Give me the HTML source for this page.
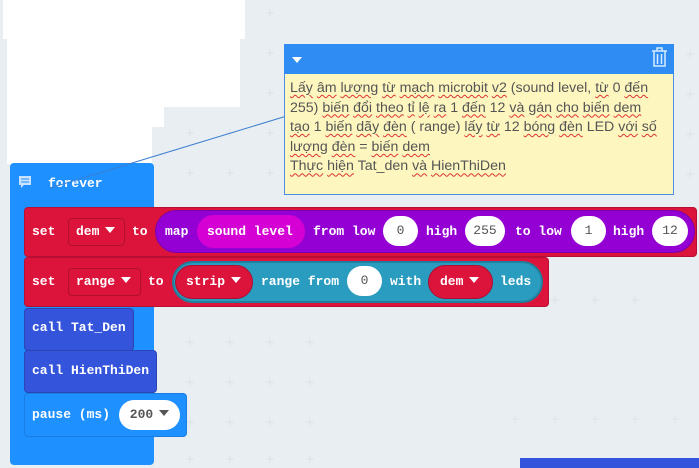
<!DOCTYPE html>
<html><head><meta charset="utf-8"><style>
*{margin:0;padding:0;box-sizing:border-box}
body{width:699px;height:468px;overflow:hidden;background:#e9eef2;position:relative;font-family:"Liberation Mono",monospace;font-weight:bold;font-size:13px;color:#fff}
.a{position:absolute}
.t{position:absolute;line-height:16px;white-space:nowrap}
.w{position:absolute;background:#fff;border-radius:15px;color:#555;text-align:center;line-height:30px;height:30px;font-weight:normal}
.dd::after{content:"";display:inline-block;margin-left:6px;border-left:5px solid transparent;border-right:5px solid transparent;border-top:6px solid currentColor;vertical-align:2px}
.cm{font-family:"Liberation Sans",sans-serif;font-weight:normal;font-size:14.2px;color:#555;line-height:19.6px;white-space:nowrap}
.cm u{text-decoration:underline wavy #d33;text-decoration-thickness:1px;text-underline-offset:2px}
</style></head><body>
<svg class="a" style="left:0;top:0" width="699" height="468" stroke="#dde2e6">
<path d="M270 9v8M266 13h8M270 49v8M266 53h8M270 89v8M266 93h8M190 129v8M186 133h8M230 129v8M226 133h8M270 129v8M266 133h8M190 169v8M186 173h8M230 169v8M226 173h8M270 169v8M266 173h8
M150 338v8M190 338v8M230 338v8M270 338v8M310 338v8M146 342h8M186 342h8M226 342h8M266 342h8M306 342h8
M190 378v8M230 378v8M270 378v8M310 378v8M186 382h8M226 382h8M266 382h8M306 382h8
M190 418v8M230 418v8M270 418v8M310 418v8M186 422h8M226 422h8M266 422h8M306 422h8
M190 455v8M230 455v8M270 455v8M310 455v8M186 459h8M226 459h8M266 459h8M306 459h8
M555 296v8M595 296v8M635 296v8M551 300h8M591 300h8M631 300h8
M515 415v8M555 415v8M595 415v8M635 415v8M675 415v8M511 419h8M551 419h8M591 419h8M631 419h8M671 419h8
M690 50v8M690 90v8M690 130v8M690 170v8M686 54h8M686 94h8M686 134h8M686 174h8
M310 298v8M350 298v8M390 298v8M430 298v8M470 298v8M306 302h8M346 302h8M386 302h8M426 302h8M466 302h8"/>
</svg>
<div class="a" style="left:3px;top:0;width:242px;height:39px;background:#fff"></div>
<div class="a" style="left:7px;top:39px;width:233px;height:68px;background:#fff"></div>
<div class="a" style="left:7px;top:107px;width:157px;height:20px;background:#fff"></div>
<div class="a" style="left:7px;top:127px;width:145px;height:37px;background:#fff"></div>

<div class="a" style="left:10px;top:163px;width:144px;height:302px;background:#1e90ff;border-radius:4px"></div>
<svg class="a" style="left:18px;top:175px" width="14" height="13"><rect x="1" y="1" width="12" height="9" fill="#c9e2ff"/><path d="M3 10v3l3-3z" fill="#c9e2ff"/><path d="M3 4h8M3 7h8" stroke="#1e90ff"/></svg>
<div class="t" style="left:48px;top:176px">forever</div>

<div class="a" style="left:24px;top:207px;width:673px;height:50px;background:#dc143c;border-radius:4px;border:1px solid #b81034"></div>
<div class="t" style="left:32px;top:224px">set</div>
<div class="a dd" style="left:68px;top:218px;width:57px;height:28px;border:1px solid #b0102f;border-radius:4px;line-height:26px;padding-left:7px">dem</div>
<div class="t" style="left:132px;top:224px">to</div>
<div class="a" style="left:155px;top:210px;width:540px;height:43px;background:#9400d3;border-radius:22px;border:1px solid #7a00ad"></div>
<div class="t" style="left:165px;top:224px">map</div>
<div class="a" style="left:197px;top:215px;width:108px;height:33px;background:#d400d4;border-radius:17px"></div>
<div class="t" style="left:207px;top:224px">sound level</div>
<div class="t" style="left:313px;top:224px">from low</div>
<div class="w" style="left:383px;top:216px;width:35px">0</div>
<div class="t" style="left:426px;top:224px">high</div>
<div class="w" style="left:465px;top:216px;width:40px">255</div>
<div class="t" style="left:515px;top:224px">to low</div>
<div class="w" style="left:571px;top:216px;width:35px">1</div>
<div class="t" style="left:613px;top:224px">high</div>
<div class="w" style="left:652px;top:216px;width:36px">12</div>

<div class="a" style="left:24px;top:257px;width:525px;height:50px;background:#dc143c;border-radius:4px;border:1px solid #b81034"></div>
<div class="t" style="left:32px;top:274px">set</div>
<div class="a dd" style="left:68px;top:268px;width:73px;height:28px;border:1px solid #b0102f;border-radius:4px;line-height:26px;padding-left:7px">range</div>
<div class="t" style="left:148px;top:274px">to</div>
<div class="a" style="left:172px;top:261px;width:371px;height:42px;background:#2a9cbf;border-radius:21px;border:2px solid #1f7f9c"></div>
<div class="a dd" style="left:175px;top:265px;width:78px;height:34px;background:#dc143c;border-radius:17px;border:1px solid #a80f30;line-height:32px;padding-left:10px">strip</div>
<div class="t" style="left:261px;top:274px">range from</div>
<div class="w" style="left:347px;top:266px;width:35px">0</div>
<div class="t" style="left:390px;top:274px">with</div>
<div class="a dd" style="left:428px;top:265px;width:65px;height:34px;background:#dc143c;border-radius:17px;border:1px solid #a80f30;line-height:32px;padding-left:11px">dem</div>
<div class="t" style="left:500px;top:274px">leds</div>

<div class="a" style="left:24px;top:308px;width:110px;height:43px;background:#3455db;border-radius:4px;border:1px solid #2a46b5"></div>
<div class="t" style="left:32px;top:320px">call Tat_Den</div>
<div class="a" style="left:24px;top:350px;width:133px;height:43px;background:#3455db;border-radius:4px;border:1px solid #2a46b5"></div>
<div class="t" style="left:32px;top:363px">call HienThiDen</div>
<div class="a" style="left:24px;top:393px;width:163px;height:44px;background:#1e90ff;border-radius:4px;border:1px solid #1a7de0"></div>
<div class="t" style="left:32px;top:407px">pause (ms)</div>
<div class="w dd" style="left:119px;top:400px;width:61px;color:#555;font-weight:bold">200</div>

<svg class="a" style="left:0;top:0" width="699" height="468"><path d="M50 188L290 115" stroke="#3a7fd0" stroke-width="1"/></svg>

<div class="a" style="left:284px;top:44px;width:390px;height:151px;border:1px solid #4a90e2;background:#fef6bf"></div>
<div class="a" style="left:284px;top:44px;width:390px;height:30px;background:#2f8cf2"></div>
<div class="a" style="left:292px;top:57px;border-left:5px solid transparent;border-right:5px solid transparent;border-top:6px solid #fff"></div>
<svg class="a" style="left:651px;top:47px" width="17" height="21" fill="none" stroke="#d7ecff" stroke-width="1.5"><path d="M1 4h15M6 4V1h5v3M3 4v15h11V4M6.5 7v10M10.5 7v10"/></svg>
<div class="a cm" style="left:290px;top:79px;width:380px">
<u>Lấy</u> <u>âm</u> <u>lượng</u> <u>từ</u> <u>mạch</u> <u>microbit</u> <u>v2</u> (sound level, <u>từ</u> 0 <u>đến</u><br>
255) <u>biến</u> <u>đổi</u> <u>theo</u> <u>tỉ</u> <u>lệ</u> <u>ra</u> 1 <u>đến</u> 12 <u>và</u> <u>gán</u> <u>cho</u> <u>biến</u> <u>dem</u><br>
<u>tạo</u> 1 <u>biến</u> <u>dãy</u> <u>đèn</u> ( range) <u>lấy</u> <u>từ</u> 12 <u>bóng</u> <u>đèn</u> LED <u>với</u> <u>số</u><br>
<u>lượng</u> <u>đèn</u> = <u>biến</u> <u>dem</u><br>
<u>Thực</u> <u>hiện</u> Tat_den <u>và</u> <u>HienThiDen</u>
</div>

<div class="a" style="left:520px;top:458px;width:179px;height:10px;background:#3455db"></div>
</body></html>
